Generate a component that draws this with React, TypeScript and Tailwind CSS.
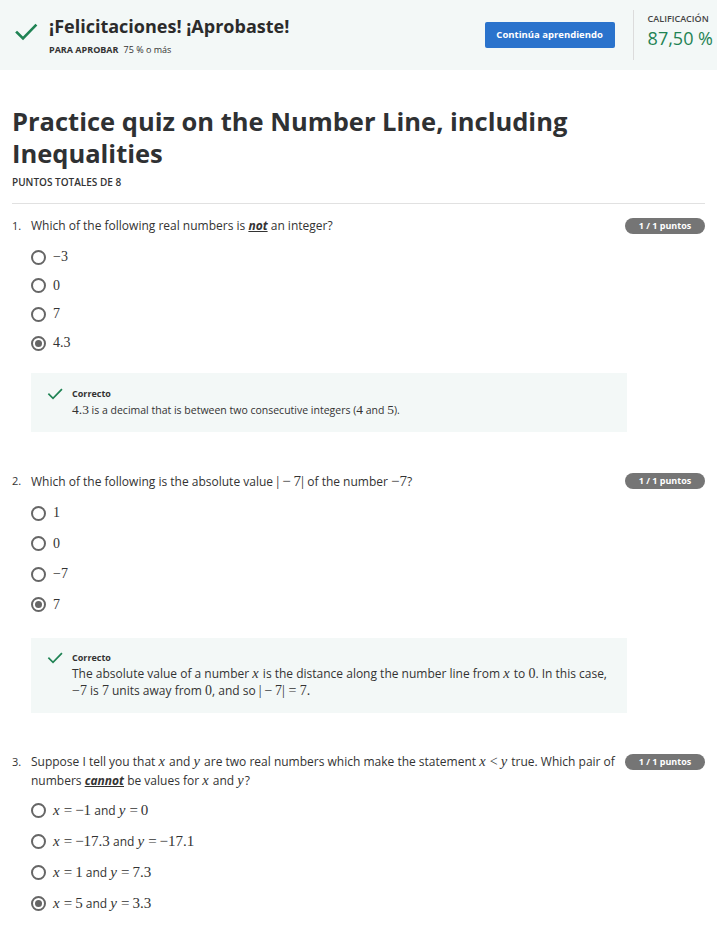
import React from 'react';

const GREEN = '#1f8354';

function Check({ className }: { className?: string }) {
  return (
    <svg viewBox="0 0 24 24" className={className} fill="none" stroke={GREEN} strokeWidth="2.6" strokeLinecap="square">
      <path d="M3 12.5l6 6L21.5 5.5" />
    </svg>
  );
}

// math pieces rendered in a serif, like the KaTeX output in the reference
function M({ children, size = 'text-[14px]' }: { children: React.ReactNode; size?: string }) {
  return <span className={`font-['Liberation_Serif','DejaVu_Serif',serif] ${size} text-[#333]`}>{children}</span>;
}
function V({ children, size = 'text-[14.5px]' }: { children: React.ReactNode; size?: string }) {
  return (
    <span className={`font-['Liberation_Serif','DejaVu_Serif',serif] italic ${size} text-[#333] pr-[1px]`}>{children}</span>
  );
}

function Radio({ checked }: { checked?: boolean }) {
  return (
    <span className="w-[15px] h-[15px] rounded-full border-2 border-[#666] flex items-center justify-center shrink-0">
      {checked && <span className="w-[7px] h-[7px] rounded-full bg-[#666]" />}
    </span>
  );
}

function Badge() {
  return (
    <span className="shrink-0 h-[16px] w-[80px] rounded-full bg-[#757575] text-white text-[9px] font-bold flex items-center justify-center">
      1 / 1 puntos
    </span>
  );
}

function Options({ items, gap }: { items: { label: React.ReactNode; checked?: boolean }[]; gap: string }) {
  return (
    <div className={`flex flex-col ${gap}`}>
      {items.map((o, i) => (
        <div key={i} className="h-[20px] flex items-center gap-[7px]">
          <Radio checked={o.checked} />
          <span className="text-[12px] text-[#333] leading-none">{o.label}</span>
        </div>
      ))}
    </div>
  );
}

function Feedback({ children, className }: { children: React.ReactNode; className?: string }) {
  return (
    <div className={`w-[596px] bg-[#f3f8f7] flex gap-[9px] pl-4 pr-4 ${className ?? ''}`}>
      <Check className="w-[16px] h-[16px] mt-[-1px] shrink-0" />
      <div>
        <div className="text-[9px] font-bold text-[#333] leading-[14px]">Correcto</div>
        {children}
      </div>
    </div>
  );
}

// "x = a and y = b" option label
function Pair({ a, b }: { a: string; b: string }) {
  return (
    <>
      <V size="text-[15px]">x</V>
      <M size="text-[15px]">&thinsp;=&thinsp;{a}</M> and <V size="text-[15px]">y</V>
      <M size="text-[15px]">&thinsp;=&thinsp;{b}</M>
    </>
  );
}

export default function App() {
  return (
    <div className="w-[717px] min-h-[928px] bg-white font-['Open_Sans','Noto_Sans',sans-serif] text-[#333]">
      {/* Result banner */}
      <div className="h-[70px] bg-[#f3f8f7] flex items-center pl-[14px] pr-[4px]">
        <div className="flex items-start gap-[11px] self-start pt-[14px]">
          <Check className="w-[24px] h-[24px] mt-[6px]" />
          <div>
            <div className="text-[18px] font-bold text-[#2b2b2b] leading-[24px]">¡Felicitaciones! ¡Aprobaste!</div>
            <div className="text-[9px] text-[#333] mt-[6px] leading-[12px]">
              <span className="font-bold">PARA APROBAR</span>
              <span className="ml-[5px]">75 % o más</span>
            </div>
          </div>
        </div>
        <div className="ml-auto flex items-center h-full">
          <button className="w-[130px] h-[26px] bg-[#2a73cc] rounded-[2px] text-white text-[9.5px] font-bold">
            Continúa aprendiendo
          </button>
          <div className="w-px h-[50px] bg-[#dcdcdc] ml-[18px]" />
          <div className="pl-[14px] self-start pt-[13px]">
            <div className="text-[9px] font-semibold text-[#444] leading-[12px]">CALIFICACIÓN</div>
            <div className="text-[18px] text-[#1f8354] leading-[22px] mt-[2px]">87,50 %</div>
          </div>
        </div>
      </div>

      <div className="px-3">
        <h1 className="mt-[35px] text-[25.5px] font-bold leading-[32px] text-[#2f3133]">
          Practice quiz on the Number Line, including Inequalities
        </h1>
        <div className="mt-[7px] text-[10px] font-semibold leading-[12px] text-[#333]">PUNTOS TOTALES DE 8</div>
        <div className="mt-[15px] h-px bg-[#e1e1e1]" />

        {/* Question 1 */}
        <div className="mt-[13px] flex items-start">
          <span className="w-[19px] shrink-0 text-[11px] leading-[18px]">1.</span>
          <div className="flex-1 text-[12px] leading-[18px]">
            Which of the following real numbers is{' '}
            <span className="font-bold italic underline">not</span> an integer?
          </div>
          <span className="mt-[1px]">
            <Badge />
          </span>
        </div>
        <div className="pl-[19px] mt-[12px]">
          <Options
            gap="gap-[8.7px]"
            items={[
              { label: <M>−3</M> },
              { label: <M>0</M> },
              { label: <M>7</M> },
              { label: <M>4.3</M>, checked: true },
            ]}
          />
          <Feedback className="mt-[20px] pt-[14px] pb-[13px]">
            <div className="text-[10.5px] leading-[18px] text-[#333]">
              <M size="text-[13.5px]">4.3</M> is a decimal that is between two consecutive integers (
              <M size="text-[13.5px]">4</M> and <M size="text-[13.5px]">5</M>).
            </div>
          </Feedback>
        </div>

        {/* Question 2 */}
        <div className="mt-[40px] flex items-start">
          <span className="w-[19px] shrink-0 text-[11px] leading-[18px]">2.</span>
          <div className="flex-1 text-[12px] leading-[18px]">
            Which of the following is the absolute value <M size="text-[15px]">|&thinsp;−&thinsp;7|</M> of the number{' '}
            <M size="text-[15px]">−7</M>?
          </div>
          <span className="mt-[1px]">
            <Badge />
          </span>
        </div>
        <div className="pl-[19px] mt-[12px]">
          <Options
            gap="gap-[10.5px]"
            items={[
              { label: <M>1</M> },
              { label: <M>0</M> },
              { label: <M>−7</M> },
              { label: <M>7</M>, checked: true },
            ]}
          />
          <Feedback className="mt-[23px] pt-[13px] pb-[14px]">
            <div className="text-[12px] leading-[17px] text-[#333]">
              The absolute value of a number <V>x</V> is the distance along the number line from <V>x</V> to{' '}
              <M>0</M>. In this case,
              <br />
              <M>−7</M> is <M>7</M> units away from <M>0</M>, and so <M>|&thinsp;−&thinsp;7| = 7.</M>
            </div>
          </Feedback>
        </div>

        {/* Question 3 */}
        <div className="mt-[39px] flex items-start gap-[8px]">
          <span className="w-[11px] shrink-0 text-[11px] leading-[19px]">3.</span>
          <div className="flex-1 text-[12px] leading-[19px]">
            Suppose I tell you that <V>x</V> and <V>y</V> are two real numbers which make the statement{' '}
            <V>x</V> <M>&lt;</M> <V>y</V> true. Which pair of numbers{' '}
            <span className="font-bold italic underline">cannot</span> be values for <V>x</V> and <V>y</V>?
          </div>
          <span className="mt-[2px]">
            <Badge />
          </span>
        </div>
        <div className="pl-[19px] mt-[11px]">
          <Options
            gap="gap-[11px]"
            items={[
              { label: <Pair a="−1" b="0" /> },
              { label: <Pair a="−17.3" b="−17.1" /> },
              { label: <Pair a="1" b="7.3" /> },
              { label: <Pair a="5" b="3.3" />, checked: true },
            ]}
          />
        </div>
      </div>
    </div>
  );
}
